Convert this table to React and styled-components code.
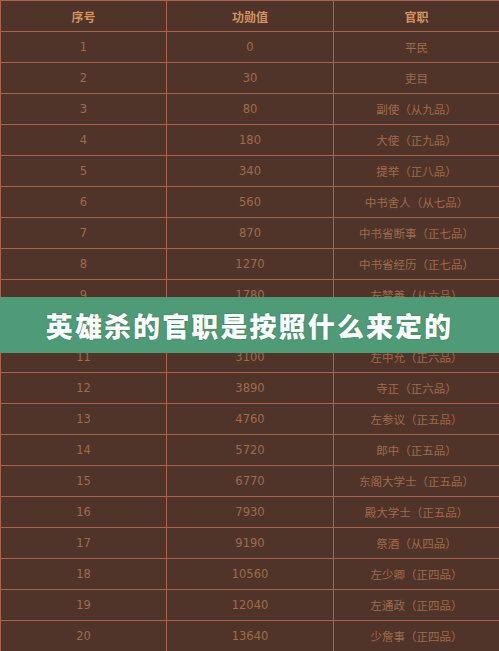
import React from 'react';
import styled, { createGlobalStyle } from 'styled-components';

const GlobalStyle = createGlobalStyle`
  html, body {
    margin: 0;
    padding: 0;
    background: #513429;
  }
  body {
    font-family: "DejaVu Sans", "Noto Sans CJK SC", sans-serif;
  }
`;

const Page = styled.div`
  position: relative;
  width: 499px;
  height: 651px;
  overflow: hidden;
  background: #513429;
`;

const Table = styled.div`
  display: grid;
  grid-template-columns: 166px 167px 166px;
  border-top: 1px solid #a9644f;
  border-left: 1px solid #a9644f;
`;

const Cell = styled.div`
  height: 30px;
  display: flex;
  align-items: center;
  justify-content: center;
  border-right: 1px solid #a9644f;
  border-bottom: 1px solid #a9644f;
  font-size: ${p => (p.$head ? '12px' : '11.5px')};
  font-weight: ${p => (p.$head ? 'bold' : 'normal')};
  color: ${p => (p.$head ? '#d4935f' : '#9e6b4c')};
  font-family: "DejaVu Sans", "Noto Sans CJK SC", sans-serif;
  white-space: nowrap;
`;

const Banner = styled.div`
  position: absolute;
  left: 0;
  right: 0;
  top: 297px;
  height: 56px;
  background: #4f9b78;
  display: flex;
  align-items: center;
  justify-content: center;
`;

const Title = styled.h1`
  margin: 0;
  font-family: "Noto Sans CJK SC", sans-serif;
  font-size: 27px;
  font-weight: 900;
  color: #ffffff;
  letter-spacing: 2.1px;
  text-shadow: 0 0 2px rgba(0, 0, 0, 0.25);
`;

// row 10 sits fully under the banner, so its cells stay empty
const rows = [
  ['1', '0', '平民'],
  ['2', '30', '吏目'],
  ['3', '80', '副使（从九品）'],
  ['4', '180', '大使（正九品）'],
  ['5', '340', '提举（正八品）'],
  ['6', '560', '中书舍人（从七品）'],
  ['7', '870', '中书省断事（正七品）'],
  ['8', '1270', '中书省经历（正七品）'],
  ['9', '1780', '左赞善（从六品）'],
  ['', '', ''],
  ['11', '3100', '左中允（正六品）'],
  ['12', '3890', '寺正（正六品）'],
  ['13', '4760', '左参议（正五品）'],
  ['14', '5720', '郎中（正五品）'],
  ['15', '6770', '东阁大学士（正五品）'],
  ['16', '7930', '殿大学士（正五品）'],
  ['17', '9190', '祭酒（从四品）'],
  ['18', '10560', '左少卿（正四品）'],
  ['19', '12040', '左通政（正四品）'],
  ['20', '13640', '少詹事（正四品）'],
];

function App() {
  return (
    <Page>
      <GlobalStyle />
      <Table>
        <Cell $head>序号</Cell>
        <Cell $head>功勋值</Cell>
        <Cell $head>官职</Cell>
        {rows.map((r, i) => (
          <React.Fragment key={i}>
            <Cell>{r[0]}</Cell>
            <Cell>{r[1]}</Cell>
            <Cell>{r[2]}</Cell>
          </React.Fragment>
        ))}
      </Table>
      <Banner>
        <Title>英雄杀的官职是按照什么来定的</Title>
      </Banner>
    </Page>
  );
}

export default App;
